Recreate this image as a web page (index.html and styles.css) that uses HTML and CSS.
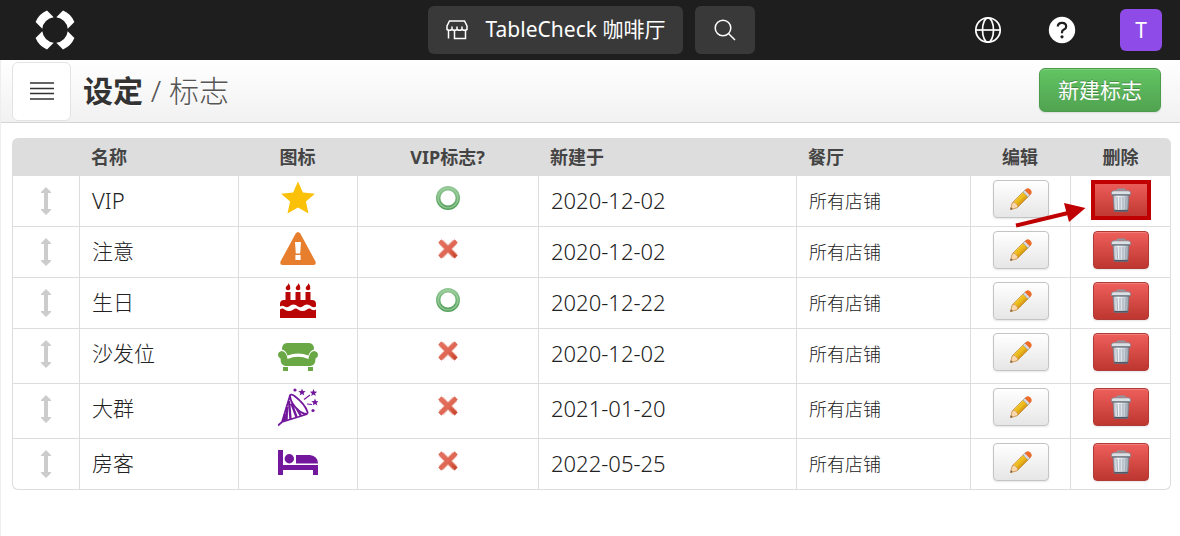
FILE: index.html
```html
<!DOCTYPE html>
<html lang="zh-CN">
<head>
<meta charset="utf-8">
<title>设定 / 标志</title>
<link rel="stylesheet" href="styles.css">
</head>
<body>
<svg class="sprite" aria-hidden="true">
  <defs>
    <linearGradient id="ringFill" x1="0" y1="0" x2="0" y2="1"><stop offset="0" stop-color="#8fc691"/><stop offset="1" stop-color="#56a25c"/></linearGradient>
    <linearGradient id="crossFill" x1="0" y1="0" x2="1" y2="1"><stop offset="0" stop-color="#e8705f"/><stop offset=".55" stop-color="#df6753"/><stop offset="1" stop-color="#c23a20"/></linearGradient>
    <linearGradient id="canFill" x1="0" y1="0" x2="1" y2="0"><stop offset="0" stop-color="#a9b0ba"/><stop offset=".3" stop-color="#f3f5f7"/><stop offset=".7" stop-color="#cdd4dc"/><stop offset="1" stop-color="#8d96a3"/></linearGradient>
    <linearGradient id="pencilFill" gradientUnits="userSpaceOnUse" x1="8" y1="8" x2="14" y2="14"><stop offset="0" stop-color="#f9dc55"/><stop offset=".55" stop-color="#f2c21a"/><stop offset="1" stop-color="#d79a14"/></linearGradient>
  </defs>
  <symbol id="move" viewBox="0 0 12 28"><path fill="#ccc" d="M6 0l5 5v1H8v16h3v1l-5 5-5-5v-1h3V6H1V5z"/></symbol>
  <symbol id="yes" viewBox="0 0 24 24">
    <circle cx="12" cy="12" r="9.800" fill="none" stroke="url(#ringFill)" stroke-width="4.400"/>
    <circle cx="12" cy="12" r="9.900" fill="none" stroke="#a3d0a4" stroke-width="1.400" opacity=".75"/>
  </symbol>
  <symbol id="no" viewBox="0 0 24 24">
    <path d="M5 5l14 14M19 5L5 19" fill="none" stroke="#f3c4bb" stroke-width="6.600"/>
    <path d="M5.300 2.800L12 9.300l6.700-6.500 2.600 2.700-6.400 6.500 6.400 6.500-2.600 2.700-6.700-6.500-6.700 6.500-2.600-2.700L9.100 12 2.700 5.500z" fill="url(#crossFill)" stroke="#d4614c" stroke-width=".7"/>
  </symbol>
  <symbol id="pencil" viewBox="0 0 24 24">
    <path d="M1.500 22.500L3.500 15.500 15.500 3.500 20.500 8.500 8.500 20.500z" fill="url(#pencilFill)" stroke="#c48f42" stroke-width=".8"/>
    <path d="M1.500 22.500L3.500 15.500 6 15.500 8.500 18.500 8.500 20.500z" fill="#f8d9ad" stroke="#d39a60" stroke-width=".8"/>
    <path d="M1.300 22.700l.7-2.500 1.800 1.800z" fill="#6e5a4a"/>
    <path d="M6 15.500L16.500 5M8.300 18L19 7.500" stroke="#e0a62c" stroke-width=".7"/>
    <path d="M14 5l2.500-2.500 5 5L19 10z" fill="#d5d8dc" stroke="#a5a9ad" stroke-width=".7"/>
    <path d="M15.800 3.200l1.500-1.500q1.700-1.300 3.700.5l.8.800q1.800 2 .5 3.700l-1.500 1.500z" fill="#ee6b28"/>
  </symbol>
  <symbol id="trash" viewBox="0 0 24 24">
    <path d="M8.500 3V1.200h7V3" fill="none" stroke="#8e96a0" stroke-width="1.600"/>
    <path d="M4 6.500h16l-1.200 16.700H5.200z" fill="url(#canFill)" stroke="#747d89" stroke-width=".8"/>
    <path d="M8 9l.5 12M11 9v12M14 9v12M17 9l-.6 12" stroke="#a3acb8" stroke-width="1"/>
    <path d="M5.200 21.800h13.600v1.700H5.200z" fill="#4d5867"/>
    <path d="M2.500 6.800V4.700Q2.500 2.800 5 2.800h14q2.500 0 2.500 1.900v2.100z" fill="#dce1e6" stroke="#7d8692" stroke-width=".8"/>
    <path d="M3 7h18" stroke="#5f6875" stroke-width="1"/>
  </symbol>
</svg>

<header class="topbar">
  <a class="logo" href="#" aria-label="TableCheck">
    <svg width="42" height="42" viewBox="-21 -21 42 42" fill="#fff">
      <g id="arm"><path d="M-8-19.400L-1.300-12.700A12.700 12.700 0 0 0-12.700-1.300L-19.400-8A21 21 0 0 1-8-19.400z"/></g>
      <use href="#arm" transform="rotate(90)"/><use href="#arm" transform="rotate(180)"/><use href="#arm" transform="rotate(270)"/>
    </svg>
  </a>
  <div class="switcher">
    <button class="dark-btn shop" type="button">
      <svg width="22" height="20" viewBox="0 0 22 20" fill="none" stroke="#fff" stroke-width="1.500"><path d="M3.500 1h15l2.500 5v3.500q-2.500 1.500-5 0-2.500 1.500-5 0-2.500 1.500-5 0-2.500 1.500-5 0V6zM6 6.500v3M11 6.500v3M16 6.500v3M2.500 10v8.500M19.500 10v8.500h-11v-7.500"/></svg>
      <span>TableCheck 咖啡厅</span>
    </button>
    <button class="dark-btn search" type="button" aria-label="搜索">
      <svg width="22" height="22" viewBox="0 0 22 22" fill="none" stroke="#fff" stroke-width="1.500"><circle cx="9" cy="9" r="7.800"/><path d="M14.500 14.500l6.500 6.500"/></svg>
    </button>
  </div>
  <nav class="tools">
    <button class="icon-btn" type="button" aria-label="语言">
      <svg width="28" height="28" viewBox="0 0 28 28" fill="none" stroke="#fff" stroke-width="1.700"><circle cx="14" cy="14" r="12.200"/><ellipse cx="14" cy="14" rx="5.500" ry="12.200"/><path d="M2 14h24"/></svg>
    </button>
    <button class="icon-btn" type="button" aria-label="帮助">
      <svg width="28" height="28" viewBox="0 0 28 28"><circle cx="14" cy="14" r="13.200" fill="#fff"/><path d="M9.800 10.500q0-3.700 4.200-3.700t4.200 3.600q0 2-2.200 3-2 1-2 2.600v1.300" fill="none" stroke="#1e1e1e" stroke-width="2.200"/><circle cx="14" cy="20.800" r="1.600" fill="#1e1e1e"/></svg>
    </button>
    <button class="avatar" type="button">T</button>
  </nav>
</header>

<div class="page">
  <div class="subbar">
    <button class="menu" type="button" aria-label="菜单">
      <svg width="24" height="18" viewBox="0 0 24 18"><path d="M0 1h24M0 6.500h24M0 11.500h24M0 17h24" stroke="#333" stroke-width="1.700"/></svg>
    </button>
    <h1><strong>设定</strong> / 标志</h1>
    <button class="create" type="button">新建标志</button>
  </div>

  <main>
    <table>
      <colgroup><col class="c-move"><col class="c-name"><col class="c-icon"><col class="c-vip"><col class="c-date"><col class="c-shop"><col class="c-edit"><col class="c-delete"></colgroup>
      <thead>
        <tr><th></th><th>名称</th><th class="mid">图标</th><th class="mid">VIP标志?</th><th>新建于</th><th>餐厅</th><th class="mid">编辑</th><th class="mid">删除</th></tr>
      </thead>
      <tbody>
        <tr>
          <td class="mid"><svg class="move"><use href="#move"/></svg></td>
          <td class="latin">VIP</td>
          <td class="mid"><svg class="flag" viewBox="0 0 40 42"><path fill="#fbc108" d="M20 1.500l4.900 10.900 12 1.300-9 7.900 2.600 11.800L20 27.400 9.500 33.400l2.600-11.800-9-7.900 12-1.300z"/></svg></td>
          <td class="mid"><svg class="mark" role="img" aria-label="是"><use href="#yes"/></svg></td>
          <td class="latin">2020-12-02</td><td class="shop-name">所有店铺</td>
          <td class="mid"><button class="act edit" type="button" aria-label="编辑"><svg><use href="#pencil"/></svg></button></td>
          <td class="mid">
            <div class="callout">
              <button class="act delete" type="button" aria-label="删除"><svg><use href="#trash"/></svg></button>
              <svg class="arrow" viewBox="0 0 72 30"><path d="M2 23.500L54 11" stroke="#c00000" stroke-width="4"/><path fill="#c00000" d="M50 1l21.500 5L55 20z"/></svg>
            </div>
          </td>
        </tr>
        <tr>
          <td class="mid"><svg class="move"><use href="#move"/></svg></td>
          <td>注意</td>
          <td class="mid"><svg class="flag" viewBox="0 0 40 42"><path fill="#e77e2d" d="M17.700 2.500q2.300-3 4.600 0L37.500 30.500q1 3.500-2 3.500h-31q-3 0-2-3.500z"/><path fill="#fff" d="M17 11h6l-.8 11.500h-4.400zM17.400 24h5.200v5h-5.200z"/></svg></td>
          <td class="mid"><svg class="mark" role="img" aria-label="否"><use href="#no"/></svg></td>
          <td class="latin">2020-12-02</td><td class="shop-name">所有店铺</td>
          <td class="mid"><button class="act edit" type="button" aria-label="编辑"><svg><use href="#pencil"/></svg></button></td>
          <td class="mid"><button class="act delete" type="button" aria-label="删除"><svg><use href="#trash"/></svg></button></td>
        </tr>
        <tr>
          <td class="mid"><svg class="move"><use href="#move"/></svg></td>
          <td>生日</td>
          <td class="mid"><svg class="flag" viewBox="0 0 40 42"><path fill="#b90504" d="M7.500 10h5v8h5v-8h5v8h5v-8h5v8h1.500q4 0 4 4v2.500q-2.200 1.500-4.500 0-4.500-4-9 0-2.200 1.500-4.500 0-4.500-4-9 0-2.200 1.500-4.500 0-2.200-1.500-4.500 0V22q0-4 4-4h1.500zM2 27.500q2.200-2 4.500 0 4.500 3 9 0 2.200-2 4.500 0 4.500 3 9 0 2.200-2 4.500 0 2.200 1.500 4.500 0V36H2z"/><path id="flame" fill="#b90504" d="M10.500 1q2.500 3.500 1.800 6-2.300 2.700-4.500 0-.6-2.500 1.500-3.500Q10.300 2.800 10.500 1z"/><use href="#flame" x="10"/><use href="#flame" x="20"/></svg></td>
          <td class="mid"><svg class="mark" role="img" aria-label="是"><use href="#yes"/></svg></td>
          <td class="latin">2020-12-22</td><td class="shop-name">所有店铺</td>
          <td class="mid"><button class="act edit" type="button" aria-label="编辑"><svg><use href="#pencil"/></svg></button></td>
          <td class="mid"><button class="act delete" type="button" aria-label="删除"><svg><use href="#trash"/></svg></button></td>
        </tr>
        <tr>
          <td class="mid"><svg class="move"><use href="#move"/></svg></td>
          <td>沙发位</td>
          <td class="mid"><svg class="flag tall" viewBox="0 0 40 46"><g fill="#69a845"><path d="M4 16.500q0-6.500 5-6.500h22q5 0 5 6.500-4 1-5.500 6-10.500-4-21 0-1.500-5-5.500-6z"/><path d="M4 18q4.500.5 5.500 8 10.500-4.500 21 0 1-7.500 5.500-8 4 .5 4 4 0 2.500-2.500 3.500 0 7-5 7.500h-25q-5-.5-5-7.500Q0 24.500 0 22q0-3.500 4-4zM5 34h5v4H5zM30 34h5v4h-5z"/></g></svg></td>
          <td class="mid"><svg class="mark" role="img" aria-label="否"><use href="#no"/></svg></td>
          <td class="latin">2020-12-02</td><td class="shop-name">所有店铺</td>
          <td class="mid"><button class="act edit" type="button" aria-label="编辑"><svg><use href="#pencil"/></svg></button></td>
          <td class="mid"><button class="act delete" type="button" aria-label="删除"><svg><use href="#trash"/></svg></button></td>
        </tr>
        <tr>
          <td class="mid"><svg class="move"><use href="#move"/></svg></td>
          <td>大群</td>
          <td class="mid"><svg class="flag tall" viewBox="0 0 40 46"><g fill="none" stroke="#73189c" stroke-width="1.800"><path d="M0 37.500l4-3.500L12 7.500q1-1.800 4.500.5Q27 16 29.500 24q.5 2-1.500 2.500L4 34M12 8.500q1 7 8 13.500 5 4 8.500 4"/><path stroke-width="2.400" d="M11 13l1.500 18M13.500 15.500l5 13.500M9 19l-.5 13.500M19 21l4 7M7 26l-1 7"/><path stroke-width="1.200" d="M26 11.500l6-4.500M29 16l5 .5"/></g><g fill="#73189c"><path id="spark" d="M24 .5l1 2.500 2.700.2-2.100 1.700.7 2.600-2.300-1.400-2.300 1.400.7-2.600-2.100-1.700L23 3z"/><use href="#spark" x="11.500" y=".5"/><use href="#spark" x="13" y="10"/><circle cx="17" cy="2" r="1.600"/><circle cx="35" cy="22.500" r="1.600"/></g></svg></td>
          <td class="mid"><svg class="mark" role="img" aria-label="否"><use href="#no"/></svg></td>
          <td class="latin">2021-01-20</td><td class="shop-name">所有店铺</td>
          <td class="mid"><button class="act edit" type="button" aria-label="编辑"><svg><use href="#pencil"/></svg></button></td>
          <td class="mid"><button class="act delete" type="button" aria-label="删除"><svg><use href="#trash"/></svg></button></td>
        </tr>
        <tr>
          <td class="mid"><svg class="move"><use href="#move"/></svg></td>
          <td>房客</td>
          <td class="mid"><svg class="flag" viewBox="0 0 40 42"><g fill="#73189c"><path d="M0 7h5v15h35v10h-5v-5H5v5H0z"/><circle cx="11.300" cy="15.700" r="4.700"/><path d="M18 12h14q8 1 8 8.500H18z"/></g></svg></td>
          <td class="mid"><svg class="mark" role="img" aria-label="否"><use href="#no"/></svg></td>
          <td class="latin">2022-05-25</td><td class="shop-name">所有店铺</td>
          <td class="mid"><button class="act edit" type="button" aria-label="编辑"><svg><use href="#pencil"/></svg></button></td>
          <td class="mid"><button class="act delete" type="button" aria-label="删除"><svg><use href="#trash"/></svg></button></td>
        </tr>
      </tbody>
    </table>
  </main>
</div>
</body>
</html>
```
FILE: styles.css
```css
* { box-sizing: border-box; }

html, body { min-height: 100%; }

body {
  display: flex;
  flex-direction: column;
  min-height: 100vh;
  margin: 0;
  background: #fff;
  color: #222;
  font-family: "Noto Sans", "Noto Sans CJK SC", sans-serif;
}

button {
  padding: 0;
  border: 0;
  font-family: inherit;
  cursor: pointer;
}

svg { display: block; }

.sprite { position: absolute; width: 0; height: 0; }

.topbar {
  display: grid;
  grid-template-columns: 1fr auto 1fr;
  align-items: center;
  height: 60px;
  padding: 0 18px 0 21px;
  background: #1e1e1e;
}

.logo { justify-self: start; margin-left: 13px; }

.switcher { display: flex; gap: 12px; }

.dark-btn {
  display: flex;
  align-items: center;
  justify-content: center;
  height: 48px;
  border-radius: 6px;
  background: #393939;
  color: #fff;
  font-size: 21px;
}

.shop { gap: 18px; padding: 0 18px; line-height: 28px; }
.shop span { padding-bottom: 2px; }
.search { width: 60px; }

.tools {
  display: flex;
  align-items: center;
  justify-self: end;
  gap: 46px;
}

.icon-btn { background: none; }

.avatar {
  width: 42px;
  height: 42px;
  border-radius: 6px;
  background: #8f4be8;
  color: #fff;
  font-size: 21px;
}

.icon-btn + .avatar { margin-left: -2px; }

.page { flex: 1; border-left: 1px solid #eee; }

.subbar {
  display: flex;
  align-items: center;
  height: 63px;
  padding: 0 19px 0 11px;
  border-bottom: 1px solid #d4d4d4;
  background: linear-gradient(#fff, #f1f1f1);
}

.menu {
  display: grid;
  place-items: center;
  width: 59px;
  height: 59px;
  border: 1px solid #e3e3e3;
  border-radius: 6px;
  background: #fff;
}

h1 {
  margin: 0 auto 0 12px;
  color: #555;
  font-size: 30px;
  font-weight: 300;
  line-height: 40px;
  text-shadow: 0 1px 0 #fff;
}

h1 strong { color: #333; font-weight: 700; }

.create {
  height: 44px;
  margin-bottom: 2px;
  padding: 0 18px 3px;
  border: 1px solid #4c9c4c;
  border-radius: 6px;
  background: linear-gradient(#62c462, #51a351);
  box-shadow: inset 0 1px 0 #81d081, 0 1px 2px #0000001a;
  color: #fff;
  font-size: 21px;
  text-shadow: 0 -1px 0 #00000040;
}

main { padding: 15px 9px 0 11px; }

table {
  width: 100%;
  border-spacing: 0;
  table-layout: fixed;
}

.c-move { width: 67px; }
.c-name { width: 159px; }
.c-icon { width: 119px; }
.c-vip { width: 181px; }
.c-date { width: 258px; }
.c-shop { width: 174px; }
.c-edit { width: 100px; }
.c-delete { width: 101px; }

th {
  height: 38px;
  padding: 0 12px;
  background: #ddd;
  color: #444;
  font-size: 18px;
  font-weight: 700;
  line-height: 36px;
  text-align: left;
}

th:first-child { border-top-left-radius: 6px; }
th:last-child { border-top-right-radius: 6px; }

td {
  padding: 4px 12px;
  border-bottom: 1px solid #ddd;
  border-left: 1px solid #ddd;
  font-size: 21px;
  font-weight: 300;
  line-height: 40px;
  vertical-align: top;
}

td:last-child { border-right: 1px solid #ddd; }
tr:last-child td:first-child { border-bottom-left-radius: 6px; }
tr:last-child td:last-child { border-bottom-right-radius: 6px; }

.mid { text-align: center; }
.latin { font-size: 22px; }
.shop-name { font-size: 18px; line-height: 42px; }

.move { width: 12px; height: 28px; margin: 7px auto 0; }
.flag { width: 40px; height: 42px; margin: 0 auto; }
.tall { height: 46px; }
.mark { width: 24px; height: 24px; margin: 6px auto 0; }

.act {
  display: grid;
  place-items: center;
  width: 56px;
  height: 38px;
  margin: 0 auto;
  border: 1px solid #c4c4c4;
  border-radius: 4px;
  box-shadow: inset 0 1px 0 #ffffff33, 0 1px 2px #0000001a;
}

.act svg { width: 24px; height: 24px; }
.edit { background: linear-gradient(#fff, #e6e6e6); }
.delete { border-color: #b23a36; background: linear-gradient(#ee5f5b, #bd362f); }

.callout {
  position: relative;
  width: 56px;
  margin: 1px auto 0;
}

.callout::before {
  content: "";
  position: absolute;
  inset: -1px -2px;
  border: 4px solid #c00000;
}

.arrow {
  position: absolute;
  top: 21px;
  left: -79px;
  width: 72px;
  height: 30px;
}
```
